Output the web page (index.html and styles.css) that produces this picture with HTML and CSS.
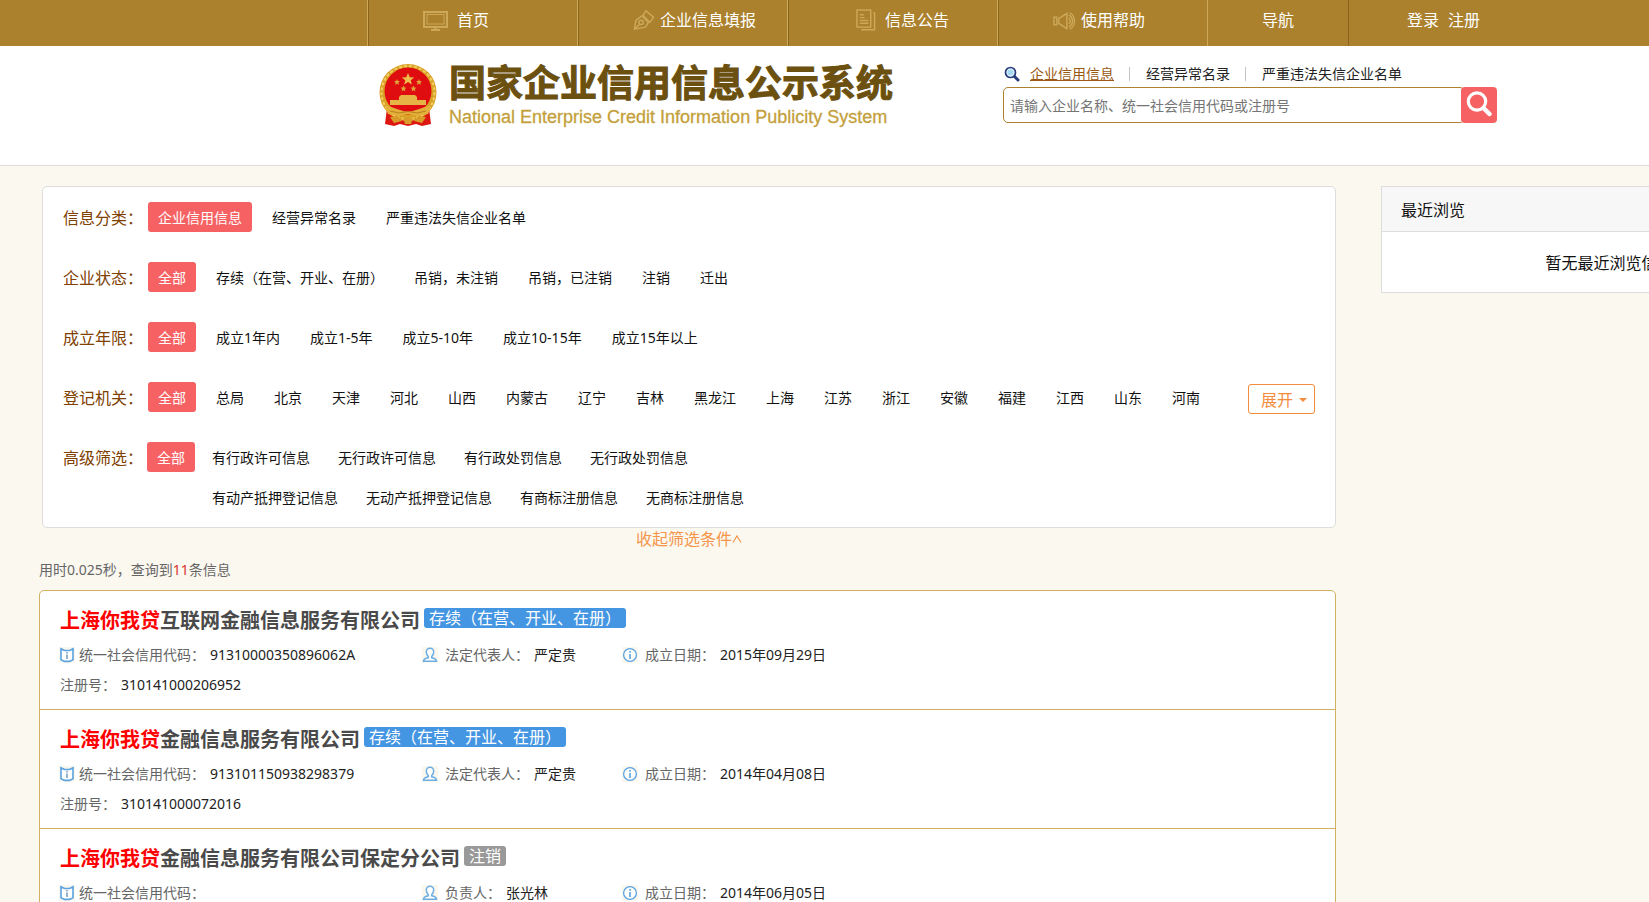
FILE: index.html
```html
<!DOCTYPE html>
<html lang="zh-CN">
<head>
<meta charset="utf-8">
<title>国家企业信用信息公示系统</title>
<link rel="stylesheet" href="styles.css">
</head>
<body>
<svg class="defs" width="0" height="0" aria-hidden="true">
  <symbol id="i-book" viewBox="0 0 16 16"><rect width="16" height="16" fill="#faf7ee"/><g fill="none" stroke="#5ba3df" stroke-width="1.6"><path d="M2 1.800l3.500 1.700h5L14 1.800v11l-3.500 1.600h-5L2 12.800z" fill="#fff"/><path d="M8 5v1.500M8 7.500v4.500" stroke="#7d9fc0"/></g></symbol>
  <symbol id="i-user" viewBox="0 0 16 16"><rect width="16" height="16" fill="#faf7ee"/><path d="M6.300 9.500C4.800 8.300 4.300 6.500 4.300 5a3.700 3.700 0 0 1 7.400 0c0 1.500-.5 3.300-2 4.500v1.300c3 .5 4.500 1.200 4.800 3.400h-13c.3-2.200 1.800-2.900 4.800-3.400z" fill="#fff" stroke="#6caee2" stroke-width="1.500"/></symbol>
  <symbol id="i-info" viewBox="0 0 16 16"><rect width="16" height="16" fill="#faf7ee"/><circle cx="8" cy="8" r="6.400" fill="#fff" stroke="#5ba3df" stroke-width="1.300"/><path d="M8 4v1.700M8 7v5" stroke="#5ba3df" stroke-width="1.600"/></symbol>
</svg>

<nav class="topbar">
  <a class="nav-item first" href="#"><svg width="25" height="22" viewBox="0 0 25 22" fill="none" stroke="#cda859"><rect x="1" y="3" width="23" height="15" stroke-width="2"/><rect x="4" y="5.500" width="17" height="9.500"/><path d="M12.500 18v3M8 21h9" stroke-width="2"/></svg><span>首页</span></a>
  <a class="nav-item tight" href="#"><svg width="22" height="22" viewBox="0 0 23 22" fill="none" stroke="#cda859" stroke-width="1.500"><path d="M1.500 20.500 3 11.500 9.500 6.500 16 13.500 13 18.500z"/><path d="M2 20l5-4.500"/><circle cx="8.500" cy="13.500" r="2.200"/><path d="M10.500 6 13.500 1.500 21.500 8 17.500 13.500z"/></svg><span>企业信息填报</span></a>
  <a class="nav-item wide" href="#"><svg width="20" height="22" viewBox="0 0 21 23" fill="none" stroke="#cda859" stroke-width="1.500"><rect x="1" y="1" width="14.500" height="18"/><path d="M5.500 21.800h14V4H18M4 6h4M4 9h5M4 12h9M4 15h9"/></svg><span>信息公告</span></a>
  <a class="nav-item tight" href="#"><svg width="23" height="22" viewBox="0 0 24 22" fill="none" stroke="#cda859" stroke-width="1.500"><rect x="1" y="8" width="3" height="8"/><path d="M6 9.500 14.500 4v16L6 14.500z"/><path d="M16.500 9c2 1.500 2 4.500 0 6M16.500 6c5 2 5 10 0 12M17.500 3.500c6.500 3 6.500 14 0 17"/></svg><span>使用帮助</span></a>
  <a class="nav-item guide" href="#"><span>导航</span></a>
  <div class="account"><a href="#">登录</a><a href="#">注册</a></div>
</nav>

<header class="header">
  <div class="brand">
    <svg class="emblem" width="60" height="64" viewBox="0 0 60 64">
      <path d="M9 45h42l2 16-9 2-6-2-8 2-8-2-6 2-9-2z" fill="#dd1712"/>
      <circle cx="30" cy="29.500" r="28.500" fill="#d9a126"/>
      <circle cx="30" cy="29.500" r="26.500" fill="none" stroke="#f3cf60" stroke-width="2" stroke-dasharray="3 2"/>
      <circle cx="30" cy="28" r="23.500" fill="#df0d10"/>
      <path d="M30 10l1.700 4.200 4.500.2-3.500 2.800 1.200 4.400-3.900-2.500-3.900 2.500 1.200-4.400-3.500-2.800 4.500-.2z" fill="#eec04c"/>
      <path d="M19 16l.9 2 2.100.2-1.600 1.400.5 2.200-1.900-1.100-1.900 1.100.5-2.200-1.600-1.400 2.100-.2zM41 16l.9 2 2.100.2-1.600 1.400.5 2.200-1.900-1.100-1.900 1.100.5-2.200-1.600-1.400 2.100-.2zM25.500 22.500l.9 2 2.100.2-1.600 1.400.5 2.200-1.900-1.100-1.900 1.100.5-2.200-1.600-1.400 2.100-.2zM35.500 22.500l.9 2 2.100.2-1.600 1.400.5 2.200-1.900-1.100-1.900 1.100.5-2.200-1.600-1.400 2.100-.2z" fill="#dda53a"/>
      <path d="M21 34l2-2h14l2 2v3h9v5H12v-5h9z" fill="#e6b445"/>
      <path d="M7 42l15 5q8 3 16 0l15-5-3 9-11 2q-9-4-18 0l-11-2z" fill="#e4b03c"/>
      <path d="M12 48l9 2q9-3 18 0l9-2" stroke="#b9801c" fill="none"/>
      <path d="M12 54l8-1 4 5-8 2zM48 54l-8-1-4 5 8 2zM25 55h10l-2 6h-6z" fill="#d99b2a"/>
    </svg>
    <div class="brand-text">
      <h1 class="brand-cn">国家企业信用信息公示系统</h1>
      <p class="brand-en">National Enterprise Credit Information Publicity System</p>
    </div>
  </div>
  <form class="search" onsubmit="return false">
    <div class="search-tabs">
      <svg width="16" height="16" viewBox="0 0 16 16"><path d="M10 10l4 4" stroke="#263a7c" stroke-width="3" stroke-linecap="round"/><circle cx="6.500" cy="6.500" r="5" fill="#e8f6fd" stroke="#263a7c" stroke-width="1.700"/><circle cx="6.500" cy="6.500" r="3" fill="#a5d8f3"/></svg>
      <a class="current" href="#">企业信用信息</a><i></i><a href="#">经营异常名录</a><i></i><a href="#">严重违法失信企业名单</a>
    </div>
    <div class="search-box">
      <input type="text" aria-label="搜索" placeholder="请输入企业名称、统一社会信用代码或注册号">
      <button type="submit" aria-label="查询"><svg width="26" height="26" viewBox="0 0 26 26" fill="none" stroke="#fff"><circle cx="11" cy="10.500" r="8.700" stroke-width="3.200"/><path d="M17.500 17l6 6" stroke-width="4.500" stroke-linecap="round"/></svg></button>
    </div>
  </form>
</header>

<div class="content">
  <main class="main">
    <section class="filters">
      <div class="row"><span class="label">信息分类：</span><div class="options"><a class="on" href="#">企业信用信息</a><a href="#">经营异常名录</a><a href="#">严重违法失信企业名单</a></div></div>
      <div class="row"><span class="label">企业状态：</span><div class="options"><a class="on" href="#">全部</a><a href="#">存续（在营、开业、在册）</a><a href="#">吊销，未注销</a><a href="#">吊销，已注销</a><a href="#">注销</a><a href="#">迁出</a></div></div>
      <div class="row"><span class="label">成立年限：</span><div class="options"><a class="on" href="#">全部</a><a href="#">成立1年内</a><a href="#">成立1-5年</a><a href="#">成立5-10年</a><a href="#">成立10-15年</a><a href="#">成立15年以上</a></div></div>
      <div class="row"><span class="label">登记机关：</span><div class="options"><a class="on" href="#">全部</a><a href="#">总局</a><a href="#">北京</a><a href="#">天津</a><a href="#">河北</a><a href="#">山西</a><a href="#">内蒙古</a><a href="#">辽宁</a><a href="#">吉林</a><a href="#">黑龙江</a><a href="#">上海</a><a href="#">江苏</a><a href="#">浙江</a><a href="#">安徽</a><a href="#">福建</a><a href="#">江西</a><a href="#">山东</a><a href="#">河南</a></div><button class="expand" type="button">展开<svg width="8" height="4" viewBox="0 0 8 4"><path d="M0 0h8L4 4z" fill="#f28c3c"/></svg></button></div>
      <div class="row advanced"><span class="label">高级筛选：</span><a class="on" href="#">全部</a>
        <div class="adv-list">
          <div class="adv-line"><a href="#">有行政许可信息</a><a href="#">无行政许可信息</a><a href="#">有行政处罚信息</a><a href="#">无行政处罚信息</a></div>
          <div class="adv-line"><a href="#">有动产抵押登记信息</a><a href="#">无动产抵押登记信息</a><a href="#">有商标注册信息</a><a href="#">无商标注册信息</a></div>
        </div>
      </div>
    </section>
    <a class="collapse" href="#">收起筛选条件<svg width="10" height="8" viewBox="0 0 10 8" fill="none" stroke="#f4954a" stroke-width="1.200"><path d="M1 7.500 5 1l4 6.500"/></svg></a>
    <p class="stats">用时0.025秒，查询到<em>11</em>条信息</p>
    <section class="results">
      <article class="card">
        <h2><a href="#"><em>上海你我贷</em>互联网金融信息服务有限公司</a><span class="tag">存续（在营、开业、在册）</span></h2>
        <div class="facts">
          <div class="fact code"><svg><use href="#i-book"/></svg><span>统一社会信用代码：</span><b>91310000350896062A</b></div>
          <div class="fact person"><svg><use href="#i-user"/></svg><span>法定代表人：</span><b>严定贵</b></div>
          <div class="fact"><svg><use href="#i-info"/></svg><span>成立日期：</span><b>2015年09月29日</b></div>
        </div>
        <div class="facts"><div class="fact reg"><span>注册号：</span><b>310141000206952</b></div></div>
      </article>
      <article class="card">
        <h2><a href="#"><em>上海你我贷</em>金融信息服务有限公司</a><span class="tag">存续（在营、开业、在册）</span></h2>
        <div class="facts">
          <div class="fact code"><svg><use href="#i-book"/></svg><span>统一社会信用代码：</span><b>913101150938298379</b></div>
          <div class="fact person"><svg><use href="#i-user"/></svg><span>法定代表人：</span><b>严定贵</b></div>
          <div class="fact"><svg><use href="#i-info"/></svg><span>成立日期：</span><b>2014年04月08日</b></div>
        </div>
        <div class="facts"><div class="fact reg"><span>注册号：</span><b>310141000072016</b></div></div>
      </article>
      <article class="card">
        <h2><a href="#"><em>上海你我贷</em>金融信息服务有限公司保定分公司</a><span class="tag off">注销</span></h2>
        <div class="facts">
          <div class="fact code"><svg><use href="#i-book"/></svg><span>统一社会信用代码：</span></div>
          <div class="fact person"><svg><use href="#i-user"/></svg><span>负责人：</span><b>张光林</b></div>
          <div class="fact"><svg><use href="#i-info"/></svg><span>成立日期：</span><b>2014年06月05日</b></div>
        </div>
      </article>
    </section>
  </main>
  <aside class="recent">
    <h3>最近浏览</h3>
    <p>暂无最近浏览信息</p>
  </aside>
</div>
</body>
</html>
```
FILE: styles.css
```css
* { box-sizing: border-box; }
body {
  margin: 0;
  height: 100vh;
  overflow: hidden;
  background: #fbf8f0;
  color: #111;
  font: 14px/20px "Noto Sans", "Noto Sans CJK SC", sans-serif;
  text-spacing-trim: space-all;
}
a { color: inherit; text-decoration: none; }
h1, h2, h3, p { margin: 0; }
em, i { font-style: normal; }
.defs { position: absolute; }

/* top navigation */
.topbar {
  display: flex;
  height: 46px;
  padding-left: 368px;
  background: #ab812d;
  color: #fff;
  font-size: 16px;
  line-height: 40px;
}
.nav-item {
  display: flex;
  flex: 0 0 210px;
  gap: 9px;
  padding-left: 54px;
  border-left: 1px solid #8a641a;
  border-right: 1px solid #cda859;
}
.nav-item svg { margin-top: 9px; }
.nav-item.first { box-shadow: -1px 0 0 #cda859; }
.nav-item.tight { gap: 5px; }
.nav-item.wide { padding-left: 67px; }
.nav-item.guide {
  flex-basis: 141px;
  border-left: 0;
  border-right-color: #8a641a;
}
.account { display: flex; gap: 9px; padding-left: 58px; }

/* header */
.header {
  display: flex;
  height: 120px;
  padding: 17px 0 0 378px;
  background: #fff;
  border-bottom: 1px solid #ddd;
}
.brand { display: flex; gap: 11px; width: 625px; flex: none; }
.brand-cn {
  color: #6b500f;
  font-size: 37px;
  line-height: 40px;
  -webkit-text-stroke: 1px #6b500f;
  white-space: nowrap;
}
.brand-en {
  padding-top: 3px;
  color: #c49f3b;
  font: 18px/22px "Liberation Sans", Arial, sans-serif;
  -webkit-text-stroke: 0.3px #c49f3b;
  white-space: nowrap;
}
.search { width: 494px; flex: none; }
.search-tabs {
  display: flex;
  align-items: center;
  height: 24px;
  padding-bottom: 2px;
  color: #222;
}
.search-tabs svg { margin: 0 10px 0 1px; }
.search-tabs .current { color: #9a5a14; text-decoration: underline; }
.search-tabs i { width: 1px; height: 14px; margin: 0 16px 0 15px; background: #c4c4c4; }
.search-box { display: flex; height: 36px; }
.search-box input {
  flex: 1;
  min-width: 0;
  margin-right: -4px;
  padding: 2px 6px 0;
  border: 1px solid #ab812d;
  border-radius: 5px;
  font: inherit;
}
.search-box input::placeholder { color: #757575; }
.search-box button {
  position: relative;
  width: 36px;
  padding: 0;
  border: 0;
  border-radius: 4px;
  background: #f66263;
}
.search-box button svg { display: block; margin: -2px auto 0; }

/* columns */
.content { display: flex; gap: 45px; padding: 20px 0 0 39px; }
.main { flex: none; width: 1297px; }
.recent { flex: none; width: 457px; align-self: flex-start; background: #fff; border: 1px solid #ddd; font-size: 16px; }
.recent h3 {
  height: 45px;
  padding-left: 19px;
  background: #f7f7f7;
  border-bottom: 1px solid #ddd;
  font-size: 16px;
  font-weight: 400;
  line-height: 46px;
}
.recent p { height: 60px; line-height: 62px; text-align: center; }

/* filters */
.filters {
  display: flex;
  flex-direction: column;
  gap: 30px;
  margin-left: 3px;
  padding: 15px 20px;
  background: #fff;
  border: 1px solid #ddd;
  border-radius: 5px;
}
.row { display: flex; line-height: 32px; height: 30px; }
.label { width: 85px; flex: none; color: #804000; font-size: 16px; }
.options { display: flex; flex: 1; gap: 10px; white-space: nowrap; }
.options a, .row .on { height: 30px; padding: 0 10px; }
.row .on { border-radius: 3px; background: #f66263; color: #fff; }
.expand {
  display: flex;
  align-items: center;
  gap: 6px;
  flex: none;
  height: 30px;
  margin-top: 2px;
  padding: 2px 7px 0 12px;
  border: 1px solid #f28c3c;
  border-radius: 3px;
  background: #fff;
  color: #f28c3c;
  font: 16px/26px "Noto Sans", "Noto Sans CJK SC", sans-serif;
}
.row.advanced { height: auto; }
.advanced .label { width: 84px; }
.adv-list { display: flex; flex-direction: column; gap: 10px; padding-left: 17px; }
.adv-line { display: flex; gap: 28px; height: 30px; }

.collapse {
  display: flex;
  justify-content: center;
  align-items: center;
  height: 22px;
  margin-left: 3px;
  color: #f4954a;
  font-size: 16px;
}
.stats { margin: 10px 0; color: #666; line-height: 20px; }
.stats em { color: #d9372b; }

/* result cards */
.results { background: #fff; border: 1px solid #d2b160; border-radius: 5px; }
.card { height: 119px; padding: 16px 20px 0; border-bottom: 1px solid #d2b160; }
.card h2 {
  display: flex;
  gap: 4px;
  height: 33px;
  font-size: 20px;
  line-height: 28px;
}
.card h2 a { color: #4a4a4a; }
.card h2 em { color: #f00; }
.tag {
  height: 20px;
  margin-top: 1px;
  padding: 0 5px;
  border-radius: 3px;
  background: #4495e2;
  color: #fff;
  font-size: 16px;
  font-weight: 400;
  line-height: 20px;
}
.tag.off { background: #999; }
.facts { display: flex; height: 30px; line-height: 30px; }
.fact { display: flex; align-items: center; gap: 5px; color: #666; }
.fact svg { width: 16px; height: 16px; margin-right: 2px; }
.fact b { color: #222; font-weight: 400; }
.fact.code { width: 362px; }
.fact.code svg { margin-right: -1px; margin-left: -1px; }
.fact.person { width: 200px; }
```
